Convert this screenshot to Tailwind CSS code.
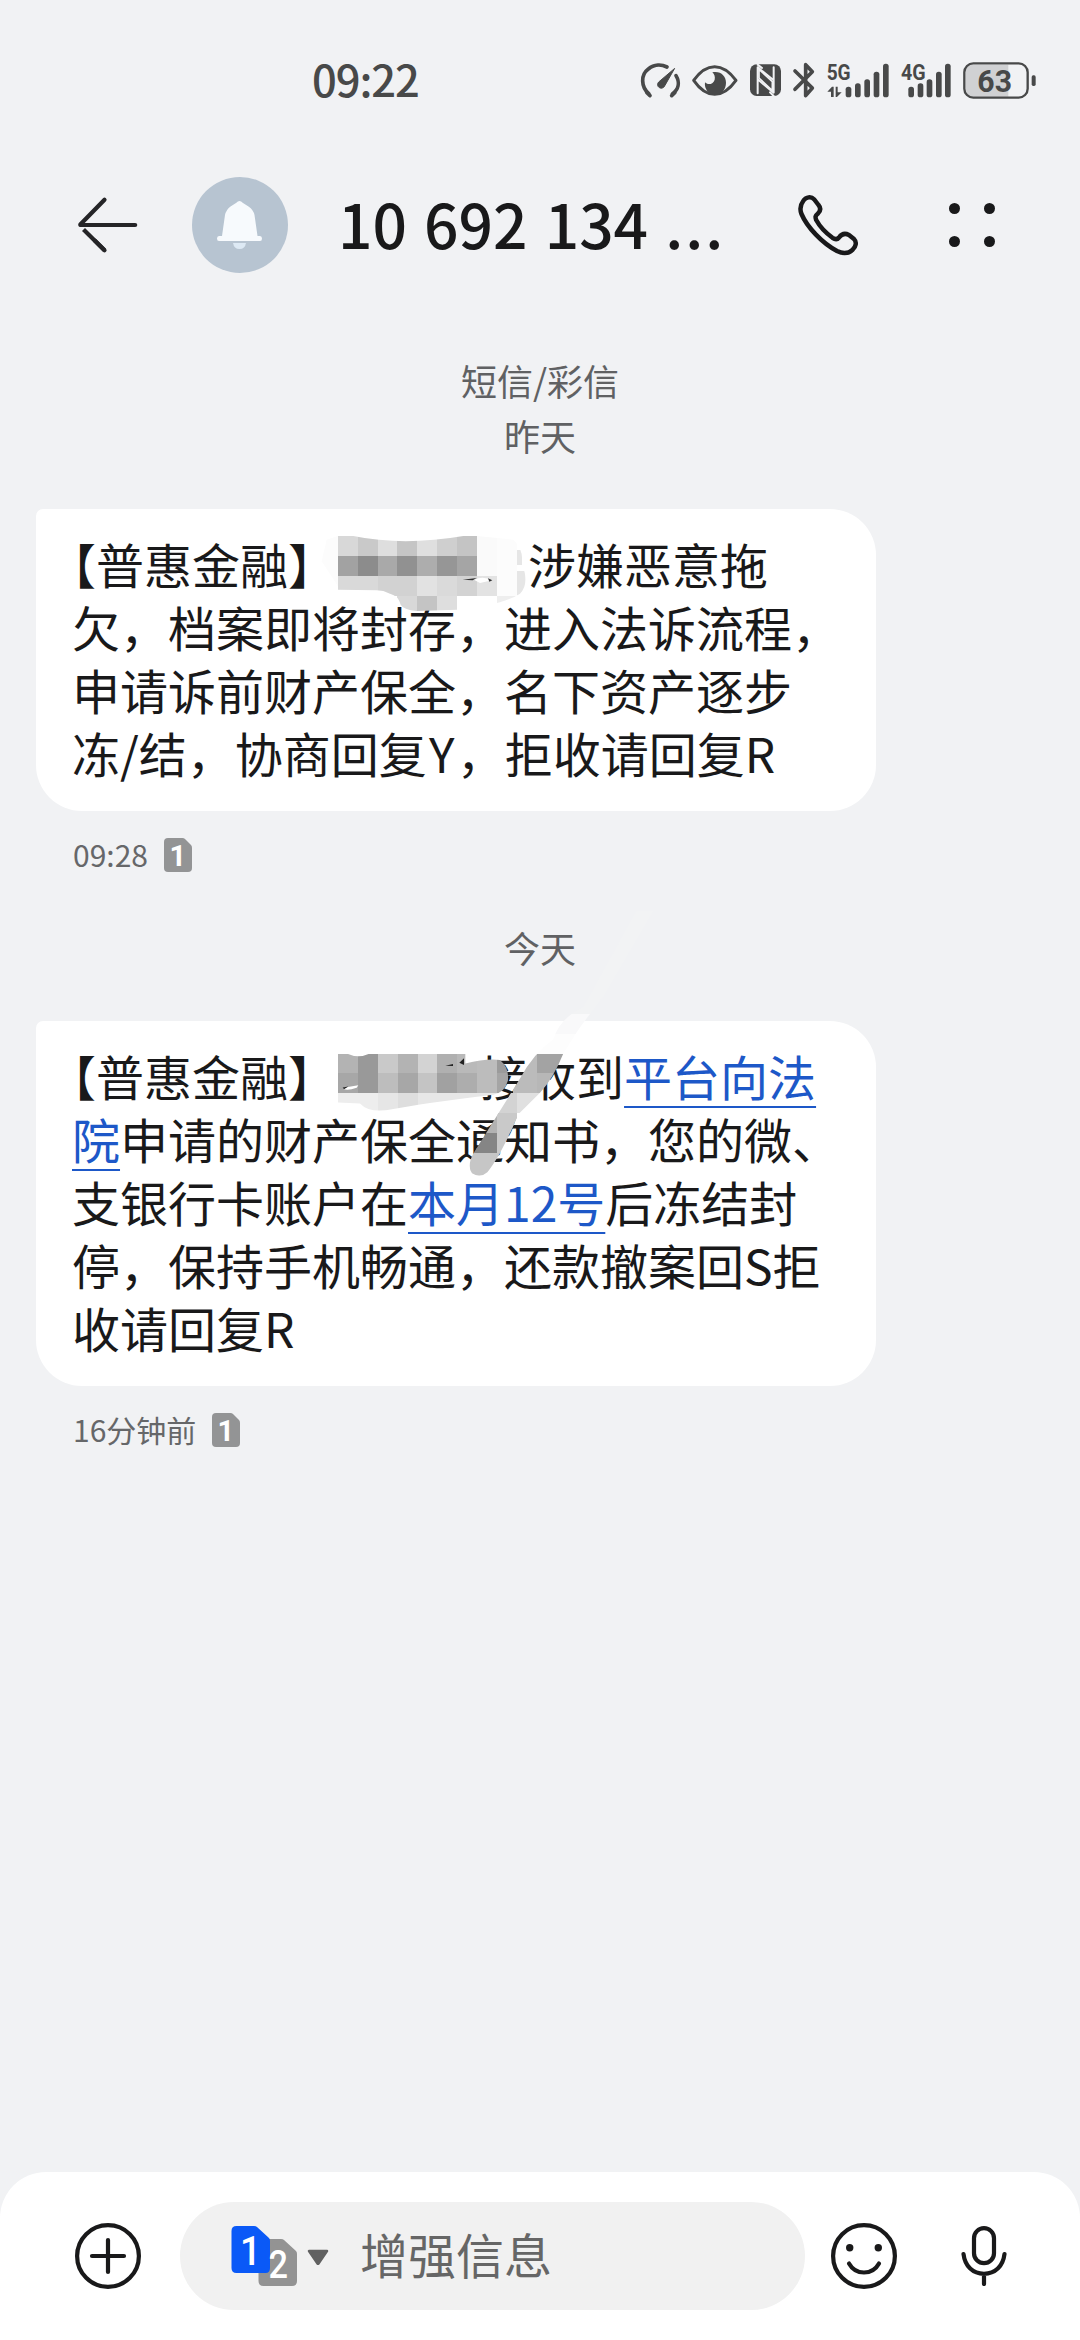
<!DOCTYPE html>
<html lang="zh-CN">
<head>
<meta charset="utf-8">
<title>短信</title>
<script src="https://cdn.jsdelivr.net/npm/@tailwindcss/browser@4"></script>
</head>
<body class="bg-[#f1f2f4]">
<main class="relative flex h-[2340px] w-[1080px] flex-col overflow-hidden bg-[#f1f2f4] font-['Noto_Sans_CJK_SC',sans-serif] text-[#19191a]">

  <!-- status bar -->
  <div class="flex h-[160px] shrink-0 items-start pl-[312px]">
    <div class="mt-[47px] w-[308px] text-[43.5px] leading-[64px] font-medium tracking-[-1.1px] text-[#484949]">09:22</div>
    <svg class="mt-[40px] h-[80px] w-[440px]" viewBox="0 0 1320 240" fill="none" stroke="#484949" stroke-linecap="round" stroke-linejoin="round">
      <path d="M87 162C62 140 62 104 85 87C103 72 125 73 141 81M168 107C180 127 176 148 157 162M80 157L90 167M165 157L155 167" stroke-width="11"/>
      <path d="M163 86L116 126A11 11 0 1 0 134 138Z" fill="#484949" stroke-width="3"/>
      <path d="M221 121Q250 80 284 80Q318 80 348 121Q318 163 284 163Q250 163 221 121Z" stroke-width="9"/>
      <path d="M277 97C302 92 318 108 318 128C318 150 303 163 285 163C266 163 252 148 255 127C264 137 281 132 284 119C286 110 283 102 277 97Z" fill="#484949" stroke="none"/>
      <rect x="390" y="73" width="93" height="95" rx="20" fill="#484949" stroke="none"/>
      <path d="M413 160V82L461 121M413 118L461 158V82M413 74L426 84M450 157L461 168" stroke="#f1f2f4" stroke-width="6"/>
      <path d="M417 88L457 125L457 152L417 114Z" stroke="#f1f2f4" stroke-width="5" fill="#484949"/>
      <path d="M525 93L577 144L557 167V74L577 95L525 148" stroke-width="11"/>
      <g fill="#484949" stroke="none">
        <rect x="677" y="140" width="17" height="32" rx="8"/>
        <rect x="705" y="130" width="17" height="42" rx="8"/>
        <rect x="733" y="118" width="17" height="54" rx="8"/>
        <rect x="761" y="95" width="17" height="77" rx="8"/>
        <rect x="789" y="71" width="17" height="101" rx="8"/>
        <rect x="865" y="140" width="17" height="32" rx="8"/>
        <rect x="893" y="130" width="17" height="42" rx="8"/>
        <rect x="920" y="118" width="17" height="54" rx="8"/>
        <rect x="948" y="95" width="17" height="77" rx="8"/>
        <rect x="975" y="71" width="17" height="101" rx="8"/>
        <path d="M633 171V155H622L636 140H641V171ZM647 140H653V157H665L651 171H647Z"/>
        <rect x="1235" y="106" width="12" height="32" rx="5"/>
        <path d="M1058 74H1165V170H1058Q1038 170 1038 150V94Q1038 74 1058 74Z" fill="#d0d1d3"/>
      </g>
      <rect x="1033" y="70" width="190" height="103" rx="27" stroke-width="7"/>
      <g fill="#484949" stroke="none" font-family="Roboto, sans-serif" font-weight="700">
        <text x="620" y="120" font-size="66" textLength="72" lengthAdjust="spacingAndGlyphs">5G</text>
        <text x="843" y="120" font-size="66" textLength="74" lengthAdjust="spacingAndGlyphs">4G</text>
        <text x="1072" y="156" font-size="95" font-weight="700" textLength="104" lengthAdjust="spacingAndGlyphs">63</text>
      </g>
    </svg>
  </div>

  <!-- conversation header -->
  <header class="flex h-[130px] shrink-0 items-center">
    <svg class="ml-[76px] h-[60px] w-[64px]" viewBox="76 195 64 60" fill="none" stroke="#252527" stroke-width="4.2" stroke-linecap="round" stroke-linejoin="round">
      <path d="M104.500 199.800L80.300 224.500Q80.300 225 81 225H135.200"/>
      <path d="M104.500 250.200L83.500 229.500" stroke-linecap="butt"/><path d="M104.500 250.200L95 240.800"/>
    </svg>
    <svg class="ml-[52px] size-[96px]" viewBox="192 177 96 96">
      <circle cx="240" cy="225" r="48" fill="#b7c4d1"/>
      <path d="M239.500 201Q241 201 243 203L248.500 206.500Q253.500 210 254.500 215L257.500 236H260Q262 236 262 238.500T260 241H219Q217 241 217 238.500T219 236H222L225 215Q226 210 230.500 206.500L236 203Q238 201 239.500 201Z" fill="#f7fafd"/>
      <path d="M233 243H246Q245 249 239.500 249T233 243Z" fill="#dde9f4"/>
    </svg>
    <h1 class="mt-[-4px] ml-[50px] w-[455px] text-[60.500px] leading-[80px] font-medium tracking-[0px] whitespace-nowrap [word-spacing:3.500px]">10 692 134 <span class="tracking-[2px]">...</span></h1>
    <svg class="h-[66px] w-[66px]" viewBox="793 192 66 66" fill="none" stroke="#19191a" stroke-width="4.500" stroke-linejoin="round">
      <path d="M803.500 200.500C806 197 811 196 814.300 199.500L818.500 205C821 208 820.500 211 818 213.500C815 216 815.200 217 816.200 220C820 227 826 233 832.500 237.800C835 239.500 837 240 839 237.500C841.500 234 845 233 849 235L854 239C857 242 856 246.500 852.500 249.800C848 254 842 253.500 837 251C822 243 807 227 801.500 214C799.500 209 800.500 204.500 803.500 200.500Z"/>
    </svg>
    <div class="ml-[90px] grid grid-cols-2 gap-x-[24px] gap-y-[22px]">
      <i class="size-[11px] rounded-full bg-[#19191a]"></i><i class="size-[11px] rounded-full bg-[#19191a]"></i>
      <i class="size-[11px] rounded-full bg-[#19191a]"></i><i class="size-[11px] rounded-full bg-[#19191a]"></i>
    </div>
  </header>

  <!-- messages -->
  <section class="flex flex-col">
    <div class="mt-[63px] text-center text-[36px] leading-[55px] text-[#606163]"><p>短信/彩信</p><p>昨天</p></div>

    <article class="relative mt-[46px] ml-[36px] h-[302px] w-[840px] rounded-[46px] rounded-tl-[7px] bg-white pt-[23px] pl-[36px] text-[48px] leading-[63px] whitespace-nowrap">
      <p><span class="-ml-[24px]">【</span>普惠金融】<span class="inline-block w-[192px]"></span>涉嫌恶意拖</p>
      <p>欠，档案即将封存，进入法诉流程，</p>
      <p>申请诉前财产保全，名下资产逐步</p>
      <p>冻/结，协商回复<span class="inline-block w-[30px] text-center">Y</span>，拒收请回复R</p>
      <svg class="absolute top-[24px] left-[284px] h-[80px] w-[220px]" viewBox="900 130 660 240">
        <defs><clipPath id="smudgeA"><path d="M954 139H1000Q1150 170 1330 139H1371L1480 150Q1512 180 1506 225Q1530 280 1500 312Q1450 345 1310 360L1190 364Q1150 360 1142 345Q1135 318 1110 312Q1090 302 1070 302L954 300Z"/></clipPath></defs>
        <path d="M920 150L954 139V290L905 215Z" fill="#fcfcfc"/>
        <g clip-path="url(#smudgeA)" shape-rendering="crispEdges">
          <path d="M954 130h60v70h-60z" fill="#d8d8d8"/><path d="M1014 130h59v70h-59z" fill="#c9c9c9"/><path d="M1073 130h59v70h-59z" fill="#dedede"/><path d="M1132 130h60v70h-60z" fill="#c5c5c5"/><path d="M1192 130h60v70h-60z" fill="#dfdfdf"/><path d="M1252 130h60v70h-60z" fill="#cfcfcf"/><path d="M1312 130h59v70h-59z" fill="#c4c4c4"/>
          <path d="M954 200h60v59h-60z" fill="#a2a2a2"/><path d="M1014 200h59v59h-59z" fill="#8c8c8c"/><path d="M1073 200h59v59h-59z" fill="#a9a9a9"/><path d="M1132 200h60v59h-60z" fill="#919191"/><path d="M1192 200h60v59h-60z" fill="#adadad"/><path d="M1252 200h60v59h-60z" fill="#969696"/><path d="M1312 200h59v59h-59z" fill="#a5a5a5"/>
          <path d="M954 259h119v60h-119z" fill="#d9d9d9"/><path d="M1073 259h119v60h-119z" fill="#d2d2d2"/><path d="M1192 259h60v60h-60z" fill="#e2e2e2"/><path d="M1252 259h60v60h-60z" fill="#dadada"/><path d="M1312 259h60v60h-60z" fill="#d3d3d3"/><path d="M1372 259h59v60h-59z" fill="#e3e3e3"/>
          <path d="M1132 319h60v50h-60z" fill="#d8d8d8"/><path d="M1192 319h60v50h-60z" fill="#c4c4c4"/><path d="M1252 319h59v50h-59z" fill="#dedede"/>
          <path d="M1371 139h60v120h-60z" fill="#fafafa"/><path d="M1431 139h60v180h-60z" fill="#fcfcfc"/><path d="M1491 180h15v45h-15zM1491 245h50v74h-50z" fill="#e6e6e6"/><path d="M1431 319h110v40h-110z" fill="#eee"/>
        </g>
        <path d="M1362 270Q1390 258 1416 272L1380 280Z" fill="#fff"/>
        <path d="M1328 270L1370 265L1358 272ZM1404 266L1417 272L1408 276Z" fill="#333"/>
      </svg>
    </article>
    <div class="mt-[22px] ml-[73px] flex h-[44px] items-center text-[30px] text-[#666769]">
      <span class="w-[91px] -translate-y-[1px] leading-[44px]">09:28</span>
      <svg class="h-[34px] w-[28px]" viewBox="0 0 28 34"><path d="M4 0H18.500Q20 0 21 1L27 7Q28 8 28 9.500V30Q28 34 24 34H4Q0 34 0 30V4Q0 0 4 0Z" fill="#939495"/><text x="5.500" y="28" font-size="29" font-weight="700" fill="#fff" font-family="Roboto, sans-serif">1</text></svg>
    </div>

    <p class="mt-[42px] text-center text-[36px] leading-[56px] text-[#606163]">今天</p>

    <article class="relative mt-[46px] ml-[36px] h-[365px] w-[840px] rounded-[46px] rounded-tl-[7px] bg-white pt-[23px] pl-[36px] text-[48px] leading-[63px] whitespace-nowrap">
      <p><span class="-ml-[24px]">【</span>普惠金融】<span class="inline-block w-[144px]"></span>接收到<a class="text-[#1d58c8] underline decoration-2 underline-offset-[10px] [text-decoration-skip-ink:none]">平台向法</a></p>
      <p><a class="text-[#1d58c8] underline decoration-2 underline-offset-[10px] [text-decoration-skip-ink:none]">院</a>申请的财产保全通知书，您的微、</p>
      <p>支银行卡账户在<a class="text-[#1d58c8] underline decoration-2 underline-offset-[10px] [text-decoration-skip-ink:none]">本月12号</a>后冻结封</p>
      <p>停，保持手机畅通，还款撤案回S拒</p>
      <p>收请回复R</p>
      <svg class="absolute top-[-121px] left-[284px] h-[280px] w-[360px]" viewBox="900 0 1080 784" preserveAspectRatio="none">
        <defs>
          <clipPath id="smudgeB"><path d="M954 430H980Q1015 445 1050 430H1336V458Q1400 443 1440 448Q1468 470 1464 505Q1455 540 1420 545Q1200 570 1120 585Q1050 600 1020 570L954 567Z"/></clipPath>
          <clipPath id="smudgeC"><path d="M1850 30L1900 30L1750 270Q1700 330 1670 370L1630 430Q1600 500 1560 540L1495 600Q1440 720 1402 762Q1380 780 1356 765Q1340 745 1360 710L1500 500Q1540 430 1600 390Q1620 330 1690 300Z"/></clipPath>
        </defs>
        <g clip-path="url(#smudgeB)" shape-rendering="crispEdges">
          <path d="M954 430h60v54h-60z" fill="#b3b3b3"/><path d="M1014 430h59v54h-59z" fill="#999"/><path d="M1073 430h60v54h-60z" fill="#c9c9c9"/><path d="M1133 430h61v54h-61z" fill="#b3b3b3"/><path d="M1194 430h58v54h-58z" fill="#d3d3d3"/><path d="M1252 430h60v54h-60z" fill="#b0b0b0"/><path d="M1312 430h60v54h-60z" fill="#b9b9b9"/><path d="M1372 430h59v54h-59z" fill="#bcbcbc"/><path d="M1431 430h40v54h-40z" fill="#9b9b9b"/>
          <path d="M954 484h60v57h-60z" fill="#a7a7a7"/><path d="M1014 484h59v57h-59z" fill="#999"/><path d="M1073 484h60v57h-60z" fill="#bdbdbd"/><path d="M1133 484h61v57h-61z" fill="#a7a7a7"/><path d="M1194 484h58v57h-58z" fill="#c4c4c4"/><path d="M1252 484h60v57h-60z" fill="#a1a1a1"/><path d="M1312 484h60v57h-60z" fill="#adadad"/><path d="M1372 484h59v57h-59z" fill="#bcbcbc"/><path d="M1431 484h40v57h-40z" fill="#a5a5a5"/>
          <path d="M954 541h119v60h-119z" fill="#ededed"/><path d="M1073 541h60v60h-60z" fill="#e6e6e6"/><path d="M1133 541h61v60h-61z" fill="#dedede"/><path d="M1194 541h280v60h-280z" fill="#e7e7e7"/>
        </g>
        <path d="M970 526L1015 519L1010 526Q985 534 972 530Z" fill="#fff"/>
        <path d="M1276 464L1299 459V465ZM1318 456L1332 443V462ZM968 525L985 522L972 530Z" fill="#222"/>
        <g clip-path="url(#smudgeC)" shape-rendering="crispEdges">
          <path d="M1600 0h300v318h-300z" fill="#f2f3f4"/>
          <path d="M1560 318h160v56h-160z" fill="#f9f9fa"/>
          <path d="M1500 374h200v56h-200z" fill="#fdfdfd"/>
          <path d="M1480 430h72v110h-72z" fill="#bbb"/><path d="M1552 430h100v54h-100z" fill="#a3a3a3"/><path d="M1552 484h100v56h-100z" fill="#b7b7b7"/>
          <path d="M1400 540h90v56h-90z" fill="#d3d3d3"/><path d="M1490 540h90v56h-90z" fill="#e0e0e0"/>
          <path d="M1340 596h150v56h-150z" fill="#b2b2b2"/><path d="M1432 596h60v120h-60z" fill="#c9c9c9"/>
          <path d="M1340 652h92v56h-92z" fill="#858585"/>
          <path d="M1340 708h110v70h-110z" fill="#c6c6c6"/>
        </g>
      </svg>
    </article>
    <div class="mt-[22px] ml-[73px] flex h-[44px] items-center text-[30px] text-[#666769]">
      <span class="w-[139px] -translate-y-[1px] leading-[44px]">16分钟前</span>
      <svg class="h-[34px] w-[28px]" viewBox="0 0 28 34"><path d="M4 0H18.500Q20 0 21 1L27 7Q28 8 28 9.500V30Q28 34 24 34H4Q0 34 0 30V4Q0 0 4 0Z" fill="#939495"/><text x="5.500" y="28" font-size="29" font-weight="700" fill="#fff" font-family="Roboto, sans-serif">1</text></svg>
    </div>
  </section>

  <!-- composer -->
  <footer class="mt-auto flex h-[168px] shrink-0 items-start rounded-t-[46px] bg-white pt-[30px]">
    <svg class="mt-[21px] ml-[75px] size-[66px]" viewBox="0 0 66 66" fill="none" stroke="#19191a" stroke-width="4.200" stroke-linecap="round"><circle cx="33" cy="33" r="30.900"/><path d="M33 17V49M17 33H49"/></svg>
    <div class="ml-[39px] flex h-[108px] w-[625px] rounded-full bg-[#f1f1f1]">
      <svg class="mt-[24px] ml-[51px] h-[60px] w-[99px] overflow-visible" viewBox="231 2226 99 60">
        <path d="M263 2239H281Q283 2239 284 2240L296 2251Q297 2252 297 2254V2281Q297 2286 292 2286H263.500Q258.500 2286 258.500 2281V2244Q258.500 2239 263 2239Z" fill="#939393"/>
        <path d="M236.500 2226H254Q256 2226 257 2227L269 2238Q270 2239 270 2241V2268Q270 2273 265.500 2273H236.500Q231.500 2273 231.500 2268V2231Q231.500 2226 236.500 2226Z" fill="#0a59f7"/>
        <g fill="#fff" font-family="Roboto, sans-serif" font-weight="500"><text x="240" y="2265" font-size="41" textLength="21" lengthAdjust="spacingAndGlyphs">1</text><text x="268.500" y="2278" font-size="39" textLength="19.500" lengthAdjust="spacingAndGlyphs">2</text></g>
        <path d="M309 2251H327L318.500 2263.500Q318 2264 317.500 2263.500Z" fill="#616161" stroke="#616161" stroke-width="2.500" stroke-linejoin="round"/>
      </svg>
      <span class="mt-[15px] ml-[30px] text-[48px] leading-[72px] text-[#666]">增强信息</span>
    </div>
    <svg class="mt-[21px] ml-[26px] size-[66px]" viewBox="0 0 66 66" fill="none" stroke="#19191a" stroke-width="4.200" stroke-linecap="round"><circle cx="33" cy="33" r="30.900"/><path d="M18 40.500Q23 49.500 33 49.500T48 40.500"/><g fill="#19191a" stroke="none"><circle cx="18.700" cy="24.700" r="3.700"/><circle cx="47.300" cy="24.700" r="3.700"/></g></svg>
    <svg class="mt-[24px] ml-[64px] h-[60px] w-[46px]" viewBox="961 2226 46 60" fill="none" stroke="#19191a" stroke-width="4.200" stroke-linecap="round"><rect x="974" y="2228.200" width="20" height="35" rx="10"/><path d="M963.500 2254C965 2266.500 973 2273.800 984 2273.800S1003 2266.500 1004.500 2254M984 2274V2284"/></svg>
  </footer>
</main>
</body>
</html>
